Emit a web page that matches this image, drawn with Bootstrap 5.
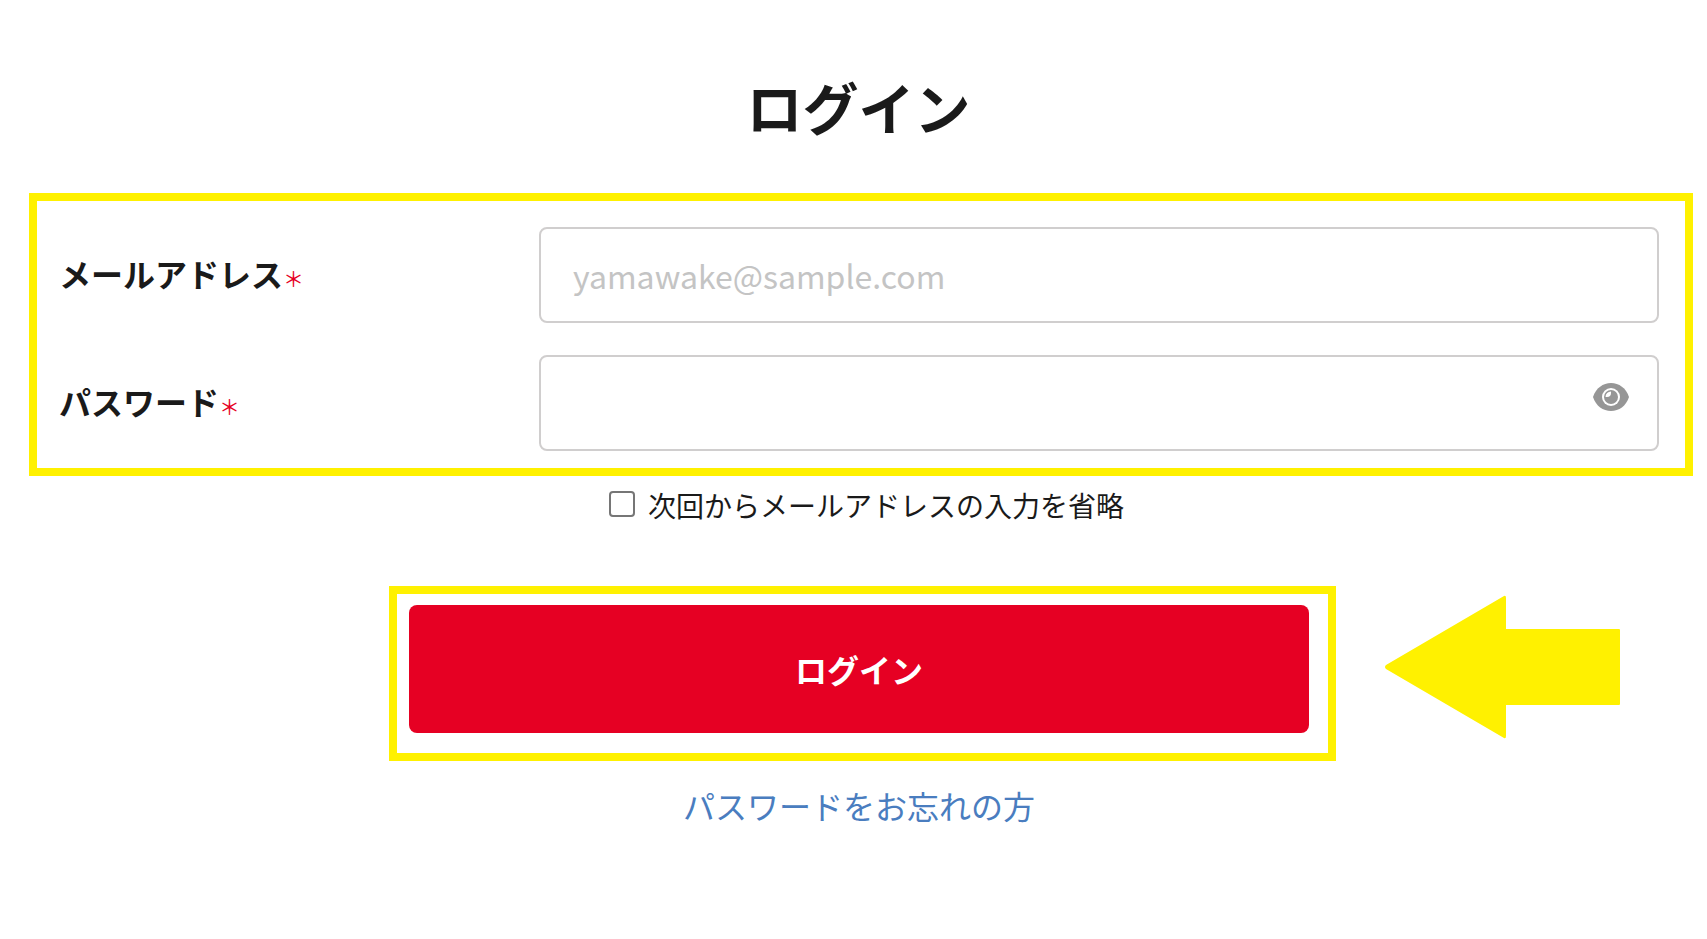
<!DOCTYPE html>
<html lang="ja">
<head>
<meta charset="utf-8">
<title>ログイン</title>
<link rel="stylesheet" href="https://cdn.jsdelivr.net/npm/bootstrap@5.3.0/dist/css/bootstrap.min.css">
<style>
body { font-family: "Noto Sans CJK JP", "Liberation Sans", sans-serif; color: #1a1a1a; background: #fff; }
.page-wrap { padding: 64px 14px 0 29px; }
.login-title { font-size: 56px; font-weight: 700; line-height: 84px; margin: 0 0 45px; padding-right: 5px; color: #1a1a1a; }
.mark-frame { border: 8px solid #fff100; }
.form-frame { padding: 26px 26px 17px 22px; gap: 32px; }
.field-label { width: 480px; flex: none; font-size: 32px; font-weight: 700; line-height: 48px; margin: 0; }
.req { color: #e60023; font-size: 21px; font-weight: 400; }
.field-input { height: 96px; border: 2px solid #d0cece; border-radius: 8px; font-size: 32px; padding: 0 32px; color: #1a1a1a; }
.field-input::placeholder { color: #c4c4c4; }
.eye-icon { position: absolute; top: 28px; right: 30px; width: 36px; height: 28px; }
.keep-row { margin-top: 8px; padding-left: 11px; gap: 13px; height: 42px; }
.keep-box { width: 26px; height: 26px; margin: -3px 0 0; flex: none; border: 2px solid #767676; border-radius: 4px; }
.keep-text { font-size: 28px; line-height: 42px; margin: 0; }
.btn-frame { width: 947px; margin: 60px 0 0 360px; padding: 11px 19px 20px 12px; }
.login-btn { height: 128px; background: #e60023; border: 0; border-radius: 8px; color: #fff; font-size: 32px; font-weight: 700; }
.login-btn:hover { background: #e60023; color: #fff; }
.btn-row { position: relative; }
.arrow-mark { position: absolute; left: 1356px; top: 9px; width: 235px; height: 144px; }
.forgot-row { margin-top: 20px; padding-right: 4px; line-height: 48px; }
.forgot-link { color: #4a7dbf; font-size: 32px; text-decoration: none; }
</style>
</head>
<body>
<main class="page-wrap">
  <h1 class="login-title text-center">ログイン</h1>
  <form>
    <div class="mark-frame form-frame d-flex flex-column">
      <div class="d-flex align-items-center">
        <label class="field-label" for="mail">メールアドレス<span class="req">＊</span></label>
        <input id="mail" class="form-control field-input" type="text" placeholder="yamawake@sample.com">
      </div>
      <div class="d-flex align-items-center">
        <label class="field-label" for="pw">パスワード<span class="req">＊</span></label>
        <div class="position-relative flex-grow-1">
          <input id="pw" class="form-control field-input" type="password">
          <svg class="eye-icon" viewBox="0 0 36 28" aria-hidden="true">
            <path fill="#969696" d="M0 14C3 5 10 0 18 0s15 5 18 14c-3 9-10 14-18 14S3 23 0 14Z"/>
            <circle cx="18" cy="14" r="9" fill="#fff"/>
            <circle cx="18" cy="14" r="7" fill="#969696"/>
            <path fill="#fff" d="M18 8.500a5.500 5.500 0 0 0-5.500 5.500 4 4 0 0 0 1.500 0 4 4 0 0 0 4-4 4 4 0 0 0 0-1.500Z"/>
          </svg>
        </div>
      </div>
    </div>
    <div class="d-flex justify-content-center align-items-center keep-row">
      <input id="keep" class="form-check-input keep-box" type="checkbox">
      <label class="keep-text" for="keep">次回からメールアドレスの入力を省略</label>
    </div>
    <div class="btn-row">
      <div class="mark-frame btn-frame">
        <button type="button" class="btn login-btn w-100">ログイン</button>
      </div>
      <svg class="arrow-mark" viewBox="0 0 235 144" aria-hidden="true">
        <path fill="#fff100" d="M1 70 119 1q2-1 2 2v31h113q1 0 1 1v74q0 1-1 1H121v31q0 3-2 2L1 74q-2-2 0-4Z"/>
      </svg>
    </div>
    <div class="forgot-row text-center"><a class="forgot-link" href="#">パスワードをお忘れの方</a></div>
  </form>
</main>
</body>
</html>
